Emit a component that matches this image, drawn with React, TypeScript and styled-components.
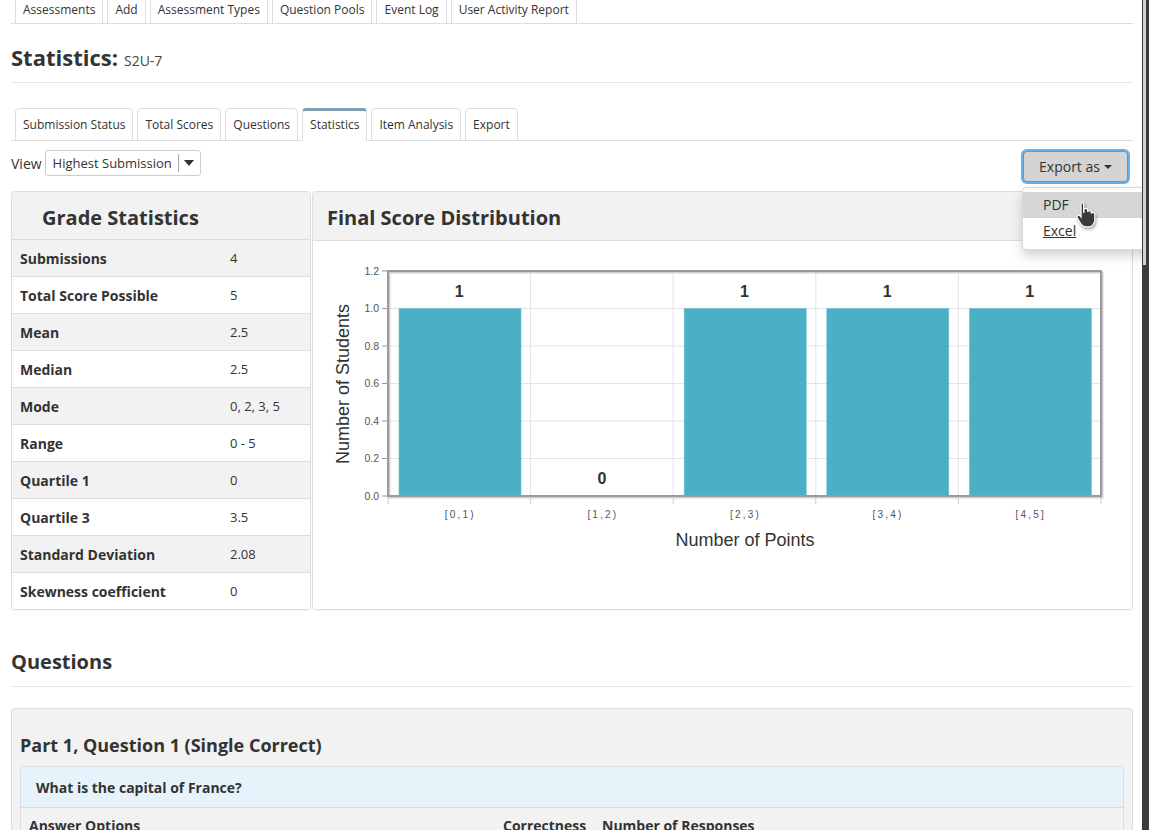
import React from 'react';
import styled, { createGlobalStyle } from 'styled-components';

const Global = createGlobalStyle`
  html, body { margin: 0; padding: 0; overflow: hidden; background: #fff; }
  body { font-family: "Open Sans", "Liberation Sans", sans-serif; color: #333; font-size: 13px; }
  * { box-sizing: border-box; }
`;

const Page = styled.div`
  width: 1149px;
  padding: 0 16px 0 11px;
`;

const TopNav = styled.ul`
  list-style: none;
  margin: -9px 0 0;
  padding: 0 0 0 4px;
  display: flex;
  border-bottom: 1px solid #ddd;
`;

const TopTab = styled.li`
  margin-right: 4px;
  padding: 9px 7px 4px;
  line-height: 18px;
  font-size: 12px;
  border: 1px solid #ddd;
  border-bottom: none;
  border-radius: 4px 4px 0 0;
  color: #333;
`;

const TitleBlock = styled.div`
  padding: 18px 0 10px;
  border-bottom: 1px solid #e5e5e5;
  display: flex;
  align-items: baseline;
`;

const Title = styled.h2`
  margin: 0;
  font-size: 22px;
  line-height: 30px;
  font-weight: 700;
`;

const SubTitle = styled.span`
  font-size: 14px;
  margin-left: 6px;
  color: #444;
`;

const SubNav = styled.ul`
  list-style: none;
  margin: 25px 0 0;
  padding: 0 0 0 4px;
  display: flex;
  border-bottom: 1px solid #ddd;
`;

const SubTab = styled.li<{ $active?: boolean }>`
  margin-right: 4px;
  margin-bottom: -1px;
  padding: ${p => (p.$active ? '4px 7px 6px' : '6px 7px 6px')};
  line-height: 19px;
  font-size: 12px;
  background: #fff;
  border: 1px solid #ddd;
  border-top: ${p => (p.$active ? '3px solid #7f9fb3' : '1px solid #ddd')};
  border-bottom: 1px solid ${p => (p.$active ? '#fff' : '#ddd')};
  border-radius: 4px 4px 0 0;
`;

const ViewRow = styled.div`
  margin-top: 8px;
  display: flex;
  justify-content: space-between;
  align-items: flex-start;
`;

const ViewLeft = styled.div`
  display: flex;
  align-items: center;
  margin-top: 1px;
  gap: 3px;
`;

const ViewLabel = styled.span`
  font-size: 14px;
`;

const Select = styled.div`
  width: 156px;
  height: 26px;
  border: 1px solid #ccc;
  border-radius: 3px;
  display: flex;
  align-items: center;
  padding-left: 7px;
  font-size: 13px;
  background: #fff;
`;

const SelectText = styled.span`
  flex: 1;
`;

const SelectDivider = styled.span`
  width: 1px;
  height: 18px;
  background: #aaa;
`;

const SelectCaret = styled.span`
  width: 21px;
  display: flex;
  justify-content: center;
`;

const ExportWrap = styled.div`
  position: relative;
  margin-right: 3px;
`;

const ExportButton = styled.div`
  margin: 2px;
  width: 105px;
  height: 31px;
  background: #d4d4d4;
  border: 1px solid #8c8c8c;
  border-radius: 4px;
  box-shadow: 0 0 0 2px #66b0ec;
  display: flex;
  align-items: center;
  justify-content: center;
  gap: 4px;
  font-size: 14px;
  color: #333;
`;

const Menu = styled.div`
  position: absolute;
  top: 38px;
  left: 1px;
  width: 170px;
  background: #fff;
  border: 1px solid rgba(0, 0, 0, 0.15);
  border-radius: 4px;
  box-shadow: 0 6px 12px rgba(0, 0, 0, 0.175);
  padding: 4px 0 5px;
  z-index: 10;
`;

const MenuItem = styled.div<{ $hover?: boolean; $underline?: boolean }>`
  position: relative;
  padding: 3px 20px;
  line-height: 20px;
  font-size: 14px;
  color: #333;
  background: ${p => (p.$hover ? '#d6d6d6' : 'transparent')};
  text-decoration: ${p => (p.$underline ? 'underline' : 'none')};
`;

const Cursor = styled.svg`
  position: absolute;
  left: 52px;
  top: 9px;
  z-index: 2;
  filter: drop-shadow(1px 2px 1.5px rgba(0, 0, 0, 0.35));
`;

const PanelsRow = styled.div`
  margin-top: 7px;
  display: flex;
  gap: 1px;
  height: 419px;
`;

const StatsPanel = styled.div`
  width: 300px;
  border: 1px solid #ddd;
  border-radius: 4px;
  overflow: hidden;
  box-shadow: 0 1px 1px rgba(0, 0, 0, 0.05);
`;

const StatsHeader = styled.div`
  height: 47px;
  background: #f2f2f2;
  display: flex;
  align-items: center;
  padding: 4px 0 0 30px;
  font-size: 20px;
  font-weight: 700;
`;

const StatRow = styled.div<{ $shade?: boolean }>`
  display: grid;
  grid-template-columns: 210px 1fr;
  height: 37px;
  border-top: 1px solid #ddd;
  background: ${p => (p.$shade ? '#f2f2f2' : '#fff')};
  align-items: center;
`;

const StatLabel = styled.span`
  padding-left: 8px;
  font-size: 14px;
  font-weight: 700;
`;

const StatValue = styled.span`
  padding-left: 8px;
  font-size: 13px;
`;

const ChartPanel = styled.div`
  flex: 1;
  border: 1px solid #ddd;
  border-radius: 4px;
  overflow: hidden;
  box-shadow: 0 1px 1px rgba(0, 0, 0, 0.05);
  display: flex;
  flex-direction: column;
`;

const ChartHeader = styled.div`
  height: 49px;
  background: #f2f2f2;
  border-bottom: 1px solid #ddd;
  display: flex;
  align-items: center;
  padding: 3px 0 0 14px;
  font-size: 20px;
  font-weight: 700;
`;

const ChartBody = styled.div`
  flex: 1;
  background: #fff;
`;

const SectionTitle = styled.h3`
  margin: 38px 0 0;
  padding-bottom: 10px;
  border-bottom: 1px solid #e5e5e5;
  font-size: 20px;
  line-height: 28px;
  font-weight: 700;
`;

const QuestionPanel = styled.div`
  margin-top: 21px;
  background: #f2f2f2;
  border: 1px solid #ddd;
  border-radius: 4px;
  padding: 23px 8px 0;
  height: 200px;
`;

const QuestionTitle = styled.h4`
  margin: 0;
  font-size: 18px;
  line-height: 26px;
  font-weight: 700;
`;

const QuestionBox = styled.div`
  margin-top: 8px;
  border: 1px solid #ddd;
  border-radius: 4px;
  overflow: hidden;
`;

const QuestionHead = styled.div`
  height: 40px;
  background: #e7f3fb;
  display: flex;
  align-items: center;
  padding-left: 15px;
  font-size: 14px;
  font-weight: 700;
`;

const AnswerHeadRow = styled.div`
  display: grid;
  grid-template-columns: 474px 99px 1fr;
  border-top: 1px solid #ddd;
  background: #f2f2f2;
  padding: 8px 8px;
  font-size: 14px;
  font-weight: 700;
  line-height: 20px;
`;

const Scrollbar = styled.div`
  position: fixed;
  top: 0;
  right: 0;
  bottom: 0;
  width: 7px;
  background: #3b3b3b;
  z-index: 20;
`;

const ScrollThumb = styled.div`
  margin-left: 1px;
  width: 3px;
  height: 265px;
  background: #d3d3d3;
`;

const stats: [string, string][] = [
  ['Submissions', '4'],
  ['Total Score Possible', '5'],
  ['Mean', '2.5'],
  ['Median', '2.5'],
  ['Mode', '0, 2, 3, 5'],
  ['Range', '0 - 5'],
  ['Quartile 1', '0'],
  ['Quartile 3', '3.5'],
  ['Standard Deviation', '2.08'],
  ['Skewness coefficient', '0'],
];

const bins = [
  { label: '[0,1)', v: 1 },
  { label: '[1,2)', v: 0 },
  { label: '[2,3)', v: 1 },
  { label: '[3,4)', v: 1 },
  { label: '[4,5]', v: 1 },
];

const Chart: React.FC = () => {
  const x0 = 75;
  const x1 = 788;
  const yTop = 30;
  const yBase = 255;
  const scale = 187.5;
  const catW = (x1 - x0) / 5;
  const yFor = (v: number) => yBase - v * scale;
  const ticks = [0, 0.2, 0.4, 0.6, 0.8, 1.0, 1.2];
  return (
    <svg width="819" height="368" viewBox="0 0 819 368" style={{ display: 'block' }}>
      {ticks.map(t => (
        <g key={t}>
          <line x1={x0} x2={x1} y1={yFor(t)} y2={yFor(t)} stroke="#e3e3e3" strokeWidth="1" />
          <line x1={69} x2={x0} y1={yFor(t)} y2={yFor(t)} stroke="#999" strokeWidth="1" />
          <text x={66} y={yFor(t) + 3.5} textAnchor="end" fontFamily="Liberation Sans, Arial, sans-serif" fontSize="10.5" fill="#555">
            {t.toFixed(1)}
          </text>
        </g>
      ))}
      {[1, 2, 3, 4].map(i => (
        <line key={i} x1={x0 + i * catW} x2={x0 + i * catW} y1={yTop} y2={yBase} stroke="#e3e3e3" strokeWidth="1" />
      ))}
      {bins.map((b, i) => (
        <g key={b.label}>
          {b.v > 0 && (
            <rect x={x0 + i * catW + 11} y={yFor(b.v)} width={122} height={b.v * scale} fill="#4bb0c5" stroke="#6cc0d2" strokeWidth="0.6" />
          )}
          <text
            x={x0 + i * catW + catW / 2}
            y={yFor(b.v) - 12}
            textAnchor="middle"
            fontFamily="Liberation Sans, Arial, sans-serif"
            fontWeight="700"
            fontSize="16"
            fill="#333"
          >
            {b.v}
          </text>
          <text
            x={x0 + i * catW + catW / 2 + 1}
            y={277}
            textAnchor="middle"
            fontFamily="Liberation Sans, Arial, sans-serif"
            fontSize="10"
            letterSpacing="2.2"
            fill="#555"
          >
            {b.label}
          </text>
        </g>
      ))}
      {[0, 1, 2, 3, 4, 5].map(i => (
        <line key={i} x1={x0 + i * catW} x2={x0 + i * catW} y1={yBase} y2={yBase + 8} stroke="#ccc" strokeWidth="1" />
      ))}
      <rect x={x0 + 1.5} y={yTop + 1.5} width={x1 - x0} height={yBase - yTop} fill="none" stroke="#d0d0d0" strokeWidth="2" />
      <rect x={x0} y={yTop} width={x1 - x0} height={yBase - yTop} fill="none" stroke="#9a9a9a" strokeWidth="2" />
      <text x={432} y={305} textAnchor="middle" fontFamily="Liberation Sans, Arial, sans-serif" fontSize="18" fill="#333">
        Number of Points
      </text>
      <text
        transform="translate(36 143) rotate(-90)"
        textAnchor="middle"
        fontFamily="Liberation Sans, Arial, sans-serif"
        fontSize="18"
        fill="#333"
      >
        Number of Students
      </text>
    </svg>
  );
};

export default function App() {
  return (
    <>
      <Global />
      <Page>
        <TopNav>
          {['Assessments', 'Add', 'Assessment Types', 'Question Pools', 'Event Log', 'User Activity Report'].map(t => (
            <TopTab key={t}>{t}</TopTab>
          ))}
        </TopNav>
        <TitleBlock>
          <Title>Statistics:</Title>
          <SubTitle>S2U-7</SubTitle>
        </TitleBlock>
        <SubNav>
          {['Submission Status', 'Total Scores', 'Questions', 'Statistics', 'Item Analysis', 'Export'].map(t => (
            <SubTab key={t} $active={t === 'Statistics'}>
              {t}
            </SubTab>
          ))}
        </SubNav>
        <ViewRow>
          <ViewLeft>
            <ViewLabel>View</ViewLabel>
            <Select>
              <SelectText>Highest Submission</SelectText>
              <SelectDivider />
              <SelectCaret>
                <svg width="10" height="6" viewBox="0 0 10 6">
                  <path d="M0 0h10L5 6z" fill="#333" />
                </svg>
              </SelectCaret>
            </Select>
          </ViewLeft>
          <ExportWrap>
            <ExportButton>
              Export as
              <svg width="8" height="4" viewBox="0 0 8 4">
                <path d="M0 0h8L4 4z" fill="#333" />
              </svg>
            </ExportButton>
            <Menu>
              <MenuItem $hover>
                PDF
                <Cursor width="22" height="29" viewBox="0 0 20 27">
                  <path
                    d="M6 1.2c1 0 1.8.8 1.8 1.8v7.6l.3-.1V8.6c0-1 .8-1.7 1.7-1.7s1.7.8 1.7 1.7v1.4c.3-.7.9-1.1 1.7-1.1 1 0 1.7.8 1.7 1.7v1c.3-.6.9-1 1.6-1 1 0 1.7.8 1.7 1.7v5.2c0 3.6-2.5 6.6-6.2 6.6H10c-2 0-3.4-.9-4.4-2.4L1.9 15.8c-.5-.8-.3-1.8.5-2.3.7-.4 1.6-.3 2.1.3l.9 1.1V3c0-1 .6-1.8 1.6-1.8z"
                    fill="#3a3a3a"
                    stroke="#fff"
                    strokeWidth="1.1"
                  />
                </Cursor>
              </MenuItem>
              <MenuItem $underline>Excel</MenuItem>
            </Menu>
          </ExportWrap>
        </ViewRow>
        <PanelsRow>
          <StatsPanel>
            <StatsHeader>Grade Statistics</StatsHeader>
            {stats.map(([k, v], i) => (
              <StatRow key={k} $shade={i % 2 === 0}>
                <StatLabel>{k}</StatLabel>
                <StatValue>{v}</StatValue>
              </StatRow>
            ))}
          </StatsPanel>
          <ChartPanel>
            <ChartHeader>Final Score Distribution</ChartHeader>
            <ChartBody>
              <Chart />
            </ChartBody>
          </ChartPanel>
        </PanelsRow>
        <SectionTitle>Questions</SectionTitle>
        <QuestionPanel>
          <QuestionTitle>Part 1, Question 1 (Single Correct)</QuestionTitle>
          <QuestionBox>
            <QuestionHead>What is the capital of France?</QuestionHead>
            <AnswerHeadRow>
              <span>Answer Options</span>
              <span>Correctness</span>
              <span>Number of Responses</span>
            </AnswerHeadRow>
          </QuestionBox>
        </QuestionPanel>
      </Page>
      <Scrollbar>
        <ScrollThumb />
      </Scrollbar>
    </>
  );
}
